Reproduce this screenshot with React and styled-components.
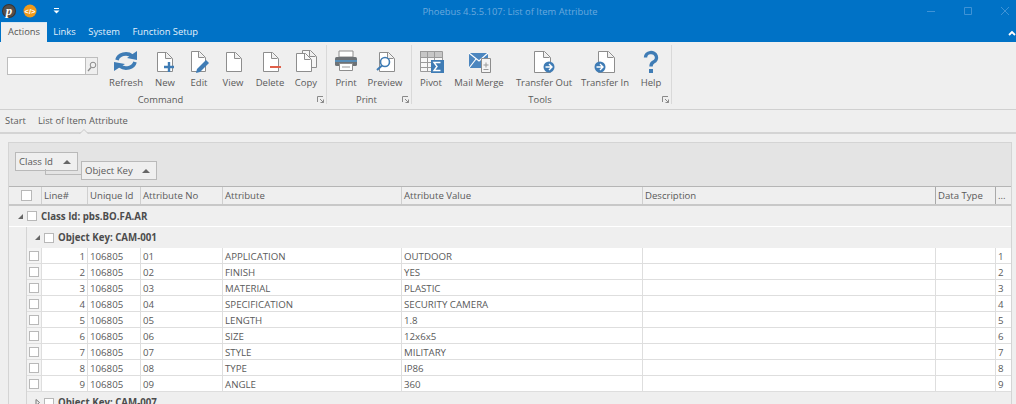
import React from "react";
import styled, { createGlobalStyle } from "styled-components";

const rows = [
  ["1", "01", "APPLICATION", "OUTDOOR"],
  ["2", "02", "FINISH", "YES"],
  ["3", "03", "MATERIAL", "PLASTIC"],
  ["4", "04", "SPECIFICATION", "SECURITY CAMERA"],
  ["5", "05", "LENGTH", "1.8"],
  ["6", "06", "SIZE", "12x6x5"],
  ["7", "07", "STYLE", "MILITARY"],
  ["8", "08", "TYPE", "IP86"],
  ["9", "09", "ANGLE", "360"],
];

const Page = ({ x = 6, y = 2, w = 15, h = 19, fill = "#fff" }) => (
  <path
    d={`M${x + 0.5} ${y + 0.5}h${w - 6}l6 6v${h - 6}h-${w}z M${x + w - 6.5} ${y + 0.5}v6h6`}
    fill={fill}
    stroke="#8d8d8d"
    strokeWidth="1"
  />
);

const Svg = ({ children }) => (
  <svg width="28" height="24" viewBox="0 0 28 24">
    {children}
  </svg>
);

const icons = {
  refresh: (
    <Svg>
      <path d="M5 10a9 7.5 0 0 1 15-4" fill="none" stroke="#3f7cb5" strokeWidth="3.6" />
      <path d="M15 8l10 2V1z" fill="#3f7cb5" />
      <path d="M23 12a9 7.5 0 0 1-15 4" fill="none" stroke="#3f7cb5" strokeWidth="3.6" />
      <path d="M13 14L2 12v9z" fill="#3f7cb5" />
    </Svg>
  ),
  new: (
    <Svg>
      <Page x={6} y={2} w={15} h={19} />
      <path d="M13 17h10M18 12v10" stroke="#3f7cb5" strokeWidth="2.4" />
    </Svg>
  ),
  edit: (
    <Svg>
      <Page x={6} y={1} w={14} h={20} />
      <path d="M11 23l1-4 9-9 3 3-9 9z" fill="#3f7cb5" />
    </Svg>
  ),
  view: (
    <Svg>
      <Page x={7} y={2} w={15} h={19} />
    </Svg>
  ),
  delete: (
    <Svg>
      <Page x={7} y={2} w={15} h={19} />
      <path d="M14 17h11" stroke="#e0604a" strokeWidth="2" />
    </Svg>
  ),
  copy: (
    <Svg>
      <Page x={10} y={0} w={14} h={17} fill="#f6f6f6" />
      <Page x={4} y={3} w={15} h={18} />
    </Svg>
  ),
  print: (
    <Svg>
      <path d="M7 1h14v6H7z" fill="#fff" stroke="#8d8d8d" />
      <rect x="3" y="7" width="22" height="9" rx="1.5" fill="#6d7276" />
      <path d="M3 11h22" stroke="#4e9ad6" strokeWidth="1.4" />
      <path d="M7.500 13.500h13v7h-13z" fill="#fff" stroke="#8d8d8d" />
      <path d="M10 17h8" stroke="#9a9a9a" />
    </Svg>
  ),
  preview: (
    <Svg>
      <Page x={8} y={2} w={15} h={19} />
      <circle cx="14" cy="12" r="4.500" fill="#fff" stroke="#3f7cb5" strokeWidth="1.600" />
      <path d="M11 15.500L6 20" stroke="#3f7cb5" strokeWidth="2" />
    </Svg>
  ),
  pivot: (
    <Svg>
      <path d="M3 1h22v6H3z" fill="#8c8c8c" />
      <path
        d="M3.500 1.500h22v20h-22zM3.500 7.500h22M3.500 12.500h22M3.500 17.500h22M10.500 1.500v20M17.500 1.500v20"
        fill="#fff"
        fillOpacity="0.5"
        stroke="#9a9a9a"
      />
      <rect x="14" y="10" width="13" height="13" fill="#3f7cb5" />
      <path d="M23.500 12.500h-6.500l3 4-3 4h6.500" fill="none" stroke="#fff" strokeWidth="1.400" />
    </Svg>
  ),
  mail: (
    <Svg>
      <rect x="4" y="3" width="19" height="15" fill="#4c86bf" />
      <path d="M4 3l10 8 9-8M4 18l7-9" fill="none" stroke="#fff" strokeWidth="1.200" />
      <path d="M16.500 8.500h9v14h-9z" fill="#f4f4f4" stroke="#8d8d8d" />
      <path d="M18.500 15h5M21 12.500v5M18.500 19.500h5" stroke="#9a9a9a" />
    </Svg>
  ),
  out: (
    <Svg>
      <Page x={4} y={1} w={16} h={21} />
      <circle cx="19" cy="17" r="5.500" fill="#3f7cb5" />
      <path d="M15.500 17h6M19 14l3 3-3 3" fill="none" stroke="#fff" strokeWidth="1.400" />
    </Svg>
  ),
  in: (
    <Svg>
      <Page x={7} y={1} w={16} h={21} />
      <circle cx="9" cy="17" r="5.500" fill="#3f7cb5" />
      <path d="M5.500 17h6M9 14l3 3-3 3" fill="none" stroke="#fff" strokeWidth="1.400" />
    </Svg>
  ),
  help: (
    <Svg>
      <path d="M8.500 7.500a5.500 5 0 1 1 8 4.500c-2 1-2.500 2-2.500 4.500" fill="none" stroke="#3f7cb5" strokeWidth="3.400" />
      <rect x="12" y="19" width="4" height="4" fill="#3f7cb5" />
    </Svg>
  ),
};

const groups = [
  {
    name: "Command",
    width: 320,
    labelPad: 13,
    search: true,
    buttons: [
      ["Refresh", "refresh", 40],
      ["New", "new", 38],
      ["Edit", "edit", 30],
      ["View", "view", 38],
      ["Delete", "delete", 36],
      ["Copy", "copy", 36],
    ],
  },
  {
    name: "Print",
    width: 85,
    labelPad: 6,
    buttons: [
      ["Print", "print", 38],
      ["Preview", "preview", 40],
    ],
  },
  {
    name: "Tools",
    width: 260,
    labelPad: 4,
    buttons: [
      ["Pivot", "pivot", 38],
      ["Mail Merge", "mail", 58],
      ["Transfer Out", "out", 72],
      ["Transfer In", "in", 50],
      ["Help", "help", 42],
    ],
  },
];

function Launcher() {
  return (
    <LauncherBox>
      <svg width="7" height="7" viewBox="0 0 7 7">
        <path d="M0.500 6V0.500H6M3 3l3.500 3.500M6.500 3.500v3h-3" fill="none" stroke="#8a8a8a" />
      </svg>
    </LauncherBox>
  );
}

function Expander({ open }) {
  return (
    <ExpanderBox>
      <svg width="7" height="7" viewBox="0 0 7 7">
        {open ? <path d="M6 1v5H1z" fill="#666" /> : <path d="M2 0.500l3.500 3-3.500 3z" fill="none" stroke="#777" />}
      </svg>
    </ExpanderBox>
  );
}

export default function App() {
  return (
    <Screen>
      <GlobalStyle />
      <TitleBar>
        <QuickAccess>
          <svg width="18" height="18" viewBox="0 0 18 18">
            <circle cx="9" cy="9" r="7" fill="#3a3230" />
            <circle cx="9" cy="9" r="6" fill="#55504c" />
            <text x="9" y="13" textAnchor="middle" fontFamily="Liberation Serif" fontStyle="italic" fontWeight="700" fontSize="13" fill="#fff">p</text>
          </svg>
          <svg width="18" height="18" viewBox="0 0 18 18">
            <circle cx="9" cy="9" r="6.500" fill="#ef9a1a" />
            <text x="9" y="12" textAnchor="middle" fontFamily="Liberation Sans" fontWeight="700" fontSize="7.500" fill="#fff">{"</>"}</text>
          </svg>
          <QuickDrop>
            <svg width="7" height="6" viewBox="0 0 7 6">
              <path d="M1 0.500h5" stroke="#fff" />
              <path d="M0.500 2.500h6L3.500 5.500z" fill="#fff" />
            </svg>
          </QuickDrop>
        </QuickAccess>
        <WindowTitle>Phoebus 4.5.5.107: List of Item Attribute</WindowTitle>
        <WindowButtons>
          <svg width="10" height="10" viewBox="0 0 10 10"><path d="M1 5.500h8" stroke="#3f93d6" /></svg>
          <svg width="10" height="10" viewBox="0 0 10 10"><path d="M1.500 1.500h7v7h-7z" fill="none" stroke="#3f93d6" /></svg>
          <svg width="10" height="10" viewBox="0 0 10 10"><path d="M1 1l8 8M9 1l-8 8" stroke="#3f93d6" /></svg>
        </WindowButtons>
      </TitleBar>
      <TabStrip>
        <Tab $active>Actions</Tab>
        <Tab>Links</Tab>
        <Tab>System</Tab>
        <Tab>Function Setup</Tab>
        <Collapse>
          <svg width="8" height="6" viewBox="0 0 8 6">
            <path d="M1 5l3-3 3 3" fill="none" stroke="#fff" strokeWidth="1.800" />
          </svg>
        </Collapse>
      </TabStrip>

      <Ribbon>
        {groups.map((group) => (
          <Group key={group.name} $width={group.width}>
            <Buttons>
              {group.search && (
                <SearchArea>
                  <SearchInput />
                  <SearchButton>
                    <svg width="10" height="11" viewBox="0 0 10 11">
                      <circle cx="6" cy="4" r="2.800" fill="none" stroke="#8a8a8a" />
                      <path d="M4 6.500L1 10" stroke="#8a8a8a" strokeWidth="1.300" />
                    </svg>
                  </SearchButton>
                </SearchArea>
              )}
              {group.buttons.map(([label, icon, width]) => (
                <ToolButton key={label} $width={width}>
                  <IconBox>{icons[icon]}</IconBox>
                  <ToolLabel>{label}</ToolLabel>
                </ToolButton>
              ))}
            </Buttons>
            <GroupLabel $pad={group.labelPad}>
              {group.name}
              <Launcher />
            </GroupLabel>
          </Group>
        ))}
      </Ribbon>

      <Breadcrumb>
        <Crumb>Start</Crumb>
        <Crumb>List of Item Attribute</Crumb>
        <Notch />
      </Breadcrumb>

      <Content>
        <GridPanel>
          <GroupPanel>
            <Chip>
              Class Id
              <ChipArrow />
            </Chip>
            <Chip $second>
              Object Key
              <ChipArrow />
            </Chip>
          </GroupPanel>

          <HeaderRow>
            <HeaderCell $center>
              <CheckBox $size={11} />
            </HeaderCell>
            <HeaderCell>Line#</HeaderCell>
            <HeaderCell>Unique Id</HeaderCell>
            <HeaderCell>Attribute No</HeaderCell>
            <HeaderCell>Attribute</HeaderCell>
            <HeaderCell>Attribute Value</HeaderCell>
            <HeaderCell>Description</HeaderCell>
            <HeaderCell>Data Type</HeaderCell>
            <HeaderCell>...</HeaderCell>
          </HeaderRow>

          <ClassRow>
            <Expander open />
            <CheckBox />
            <GroupText>Class Id: pbs.BO.FA.AR</GroupText>
          </ClassRow>

          <Nested>
            <ObjectRow>
              <Expander open />
              <CheckBox />
              <GroupText>Object Key: CAM-001</GroupText>
            </ObjectRow>
            {rows.map(([line, no, attribute, value]) => (
              <DataRow key={line}>
                <Cell $center>
                  <CheckBox />
                </Cell>
                <Cell $right>{line}</Cell>
                <Cell>106805</Cell>
                <Cell>{no}</Cell>
                <Cell>{attribute}</Cell>
                <Cell>{value}</Cell>
                <Cell />
                <Cell />
                <Cell>{line}</Cell>
              </DataRow>
            ))}
            <ObjectRow>
              <Expander />
              <CheckBox />
              <GroupText>Object Key: CAM-007</GroupText>
            </ObjectRow>
          </Nested>
        </GridPanel>
      </Content>
    </Screen>
  );
}

const GlobalStyle = createGlobalStyle`
  html, body {
    margin: 0;
    padding: 0;
    background: #efefef;
  }
  * {
    box-sizing: border-box;
  }
`;

const Screen = styled.div`
  width: 1016px;
  height: 404px;
  overflow: hidden;
  background: #efefef;
  color: #5a5a5a;
  font-family: "Open Sans", "Liberation Sans", sans-serif;
  font-size: 9.5px;
`;

const TitleBar = styled.div`
  height: 22px;
  background: #0072c6;
  display: flex;
  align-items: center;
  position: relative;
`;

const QuickAccess = styled.div`
  display: flex;
  align-items: center;
  gap: 3px;
`;

const QuickDrop = styled.div`
  display: flex;
  margin-left: 11px;
`;

const WindowTitle = styled.div`
  position: absolute;
  left: 0;
  right: 0;
  text-align: center;
  color: #6aa9dd;
  font-size: 9.4px;
  padding-left: 4px;
`;

const WindowButtons = styled.div`
  margin-left: auto;
  display: flex;
  gap: 27px;
  padding-right: 6px;
`;

const TabStrip = styled.div`
  height: 20px;
  background: #0072c6;
  display: flex;
  align-items: stretch;
  padding-left: 1px;
  position: relative;
`;

const Tab = styled.div`
  padding: 0 ${(p) => (p.$active ? "7px" : "6.3px")};
  line-height: 20px;
  font-size: 9.4px;
  color: ${(p) => (p.$active ? "#555" : "#e3f0fa")};
  background: ${(p) => (p.$active ? "#efefef" : "transparent")};
  box-shadow: ${(p) => (p.$active ? "inset 0 1px 0 #d8e6f2" : "none")};
`;

const Collapse = styled.div`
  position: absolute;
  right: 0;
  top: 8px;
  display: flex;
`;

const Ribbon = styled.div`
  height: 68px;
  display: flex;
  padding-left: 7px;
  border-bottom: 1px solid #d0d0d0;
  background: #efefef;
`;

const SearchArea = styled.div`
  display: flex;
  align-items: flex-start;
  width: 99px;
  padding-top: 7px;
`;

const SearchInput = styled.div`
  width: 79px;
  height: 18px;
  background: #fff;
  border: 1px solid #bdbdbd;
`;

const SearchButton = styled.div`
  width: 12px;
  height: 18px;
  border: 1px solid #bdbdbd;
  border-left: none;
  display: flex;
  align-items: center;
  justify-content: center;
`;

const Group = styled.div`
  width: ${(p) => p.$width}px;
  display: flex;
  flex-direction: column;
  padding-top: 8px;
  position: relative;
  &::after {
    content: "";
    position: absolute;
    right: 0;
    top: 3px;
    bottom: 5px;
    width: 1px;
    background: #d9d9d9;
  }
`;

const Buttons = styled.div`
  display: flex;
  flex: 1;
`;

const ToolButton = styled.div`
  width: ${(p) => p.$width}px;
  display: flex;
  flex-direction: column;
  align-items: center;
`;

const IconBox = styled.div`
  height: 25px;
  display: flex;
`;

const ToolLabel = styled.div`
  line-height: 14px;
  margin-top: 1px;
  white-space: nowrap;
  font-size: 9.5px;
`;

const GroupLabel = styled.div`
  height: 19px;
  line-height: 19px;
  text-align: center;
  font-size: 9.4px;
  position: relative;
  padding-right: ${(p) => p.$pad}px;
`;

const LauncherBox = styled.div`
  position: absolute;
  right: 3px;
  top: 6px;
  display: flex;
`;

const Breadcrumb = styled.div`
  height: 24px;
  border-bottom: 2px solid #d4d4d4;
  display: flex;
  align-items: center;
  gap: 12px;
  padding-left: 5px;
  position: relative;
  font-size: 9.4px;
`;

const Crumb = styled.div`
  line-height: 20px;
`;

const Notch = styled.div`
  position: absolute;
  left: 79px;
  bottom: -2px;
  width: 0;
  height: 0;
  border-left: 5px solid transparent;
  border-right: 5px solid transparent;
  border-bottom: 5px solid #c9c9c9;
  &::after {
    content: "";
    position: absolute;
    left: -4px;
    top: 1px;
    border-left: 4px solid transparent;
    border-right: 4px solid transparent;
    border-bottom: 4px solid #efefef;
  }
`;

const Content = styled.div`
  padding: 8px 4px 0 8px;
`;

const GridPanel = styled.div`
  border: 1px solid #d4d4d4;
  border-bottom: none;
  background: #efefef;
`;

const GroupPanel = styled.div`
  height: 44px;
  background: #e4e4e4;
  border-bottom: 1px solid #b5b5b5;
  padding: 9px 0 0 6px;
  display: flex;
  align-items: flex-start;
`;

const Chip = styled.div`
  height: 19px;
  width: ${(p) => (p.$second ? "76px" : "63px")};
  margin: ${(p) => (p.$second ? "9px 0 0 3px" : "0")};
  padding: 0 6px 0 3px;
  display: flex;
  align-items: center;
  justify-content: space-between;
  background: #efefef;
  border: 1px solid #b9b9b9;
  font-size: 9.6px;
  position: relative;
  &::before {
    content: "";
    display: ${(p) => (p.$second ? "block" : "none")};
    position: absolute;
    left: -37px;
    top: 7px;
    width: 36px;
    height: 5px;
    border-left: 1px solid #b9b9b9;
    border-bottom: 1px solid #b9b9b9;
  }
`;

const ChipArrow = styled.span`
  width: 0;
  height: 0;
  border-left: 4px solid transparent;
  border-right: 4px solid transparent;
  border-bottom: 4px solid #666;
`;

const HeaderRow = styled.div`
  display: grid;
  grid-template-columns: 33px 46px 53px 82px 179px 241px 293px 60px 15px;
  height: 19px;
  background: #efefef;
  border-bottom: 2px solid #c8c8c8;
`;

const HeaderCell = styled.div`
  display: flex;
  align-items: center;
  justify-content: ${(p) => (p.$center ? "center" : "flex-start")};
  padding-left: 2px;
  border-right: 1px solid #cfcfcf;
  font-size: 9.6px;
  white-space: nowrap;
  overflow: hidden;
  &:nth-last-child(2),
  &:nth-last-child(3) {
    border-right-color: #a9a9a9;
  }
  &:last-child {
    border-right: none;
  }
`;

const CheckBox = styled.span`
  display: block;
  flex: none;
  width: ${(p) => p.$size || 10}px;
  height: ${(p) => p.$size || 10}px;
  background: #fff;
  border: 1px solid #b8b8b8;
`;

const ClassRow = styled.div`
  height: 21px;
  display: flex;
  align-items: center;
  padding-left: 7px;
  gap: 3px;
  border-bottom: 1px solid #fff;
`;

const ExpanderBox = styled.span`
  display: flex;
  width: 8px;
  justify-content: center;
`;

const GroupText = styled.span`
  font-weight: 700;
  font-size: 9.7px;
  margin-left: 1px;
  color: #4c4c4c;
`;

const Nested = styled.div`
  margin-left: 17px;
  border-left: 1px solid #d4d4d4;
`;

const ObjectRow = styled.div`
  height: 21px;
  display: flex;
  align-items: center;
  padding-left: 6px;
  gap: 3px;
`;

const DataRow = styled.div`
  display: grid;
  grid-template-columns: 15px 46px 53px 82px 179px 241px 293px 60px 15px;
  height: 16px;
  background: #fff;
  border-bottom: 1px solid #dedede;
`;

const Cell = styled.div`
  display: flex;
  align-items: center;
  justify-content: ${(p) => (p.$center ? "center" : p.$right ? "flex-end" : "flex-start")};
  padding: ${(p) => (p.$center ? "0" : "1px 2px 0 2px")};
  border-right: 1px solid #dedede;
  background: ${(p) => (p.$center ? "#f4f4f4" : "#fff")};
  font-size: 9.7px;
  white-space: nowrap;
  &:last-child {
    border-right: none;
  }
`;
